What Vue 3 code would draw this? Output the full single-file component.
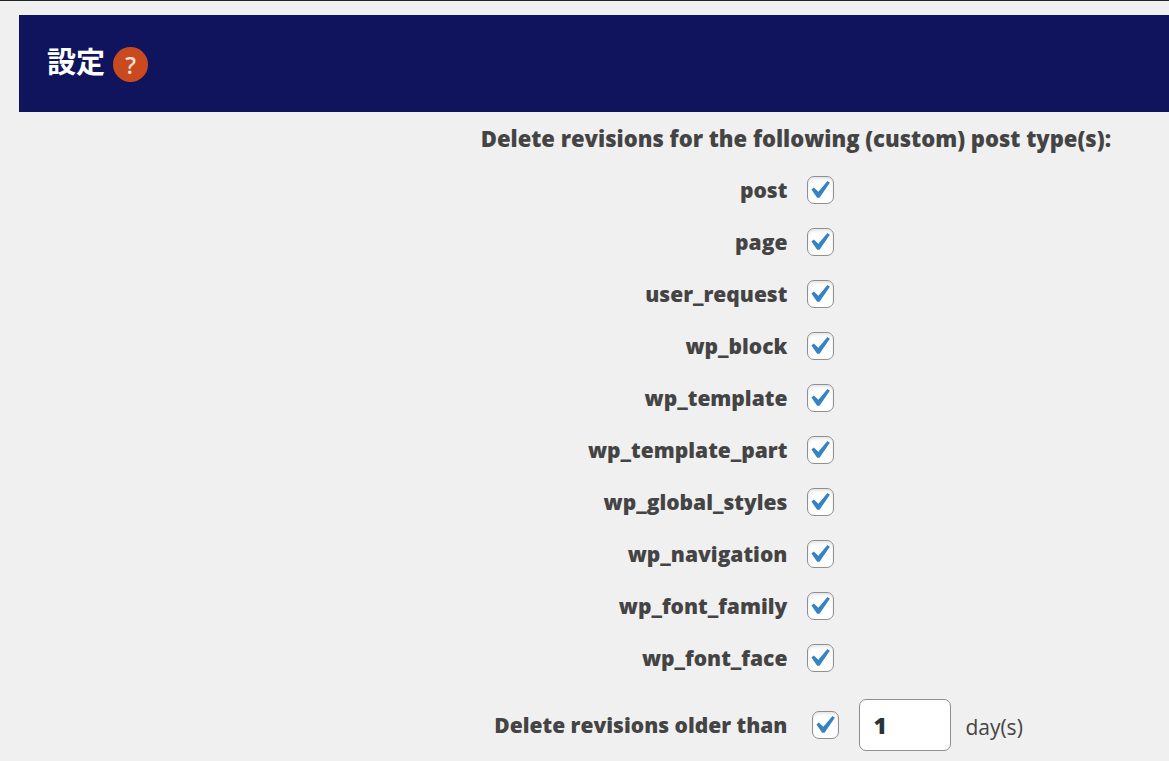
<script setup>
import { ref } from 'vue'

const types = ref([
  'post',
  'page',
  'user_request',
  'wp_block',
  'wp_template',
  'wp_template_part',
  'wp_global_styles',
  'wp_navigation',
  'wp_font_family',
  'wp_font_face',
].map((name) => ({ name, checked: true })))
const olderThan = ref(true)
const days = ref('1')
</script>

<template>
  <main class="panel">
    <header class="bar">
      <h1>設定</h1>
      <button class="help" type="button" aria-label="Help">?</button>
    </header>
    <form class="settings">
      <h2 class="title">Delete revisions for the following (custom) post type(s):</h2>
      <div v-for="t in types" :key="t.name" class="row">
        <label :for="t.name">{{ t.name }}</label>
        <span class="field">
          <span class="box">
            <input :id="t.name" v-model="t.checked" type="checkbox" />
            <svg v-if="t.checked" viewBox="3.3 2 15.2 15.8"><path d="M14.83 4.89l1.34.94-5.81 8.38H9.02L5.78 9.67l1.34-1.25 2.57 2.4z" /></svg>
          </span>
        </span>
      </div>
      <div class="row age">
        <label for="older">Delete revisions older than</label>
        <span class="field">
          <span class="box">
            <input id="older" v-model="olderThan" type="checkbox" />
            <svg v-if="olderThan" viewBox="3.3 2 15.2 15.8"><path d="M14.83 4.89l1.34.94-5.81 8.38H9.02L5.78 9.67l1.34-1.25 2.57 2.4z" /></svg>
          </span>
          <input id="days" v-model="days" class="days" type="text" aria-label="Days" />
          <label class="unit" for="days">day(s)</label>
        </span>
      </div>
    </form>
  </main>
</template>

<style>
body {
  background: #f0f0f0;
}
</style>

<style scoped>
.panel {
  border-top: 1px solid #1d2327;
  padding: 14px 0 0 19px;
  color: #444;
  font-family: "Open Sans", "Noto Sans", "Noto Sans CJK JP", sans-serif;
  font-size: 21px;
}
.bar {
  display: flex;
  align-items: center;
  gap: 8px;
  height: 97px;
  padding: 0 28px;
  box-sizing: border-box;
  background: #10145c;
}
h1 {
  margin: 0;
  padding-bottom: 8px;
  color: #fff;
  font-family: "Noto Sans CJK JP", sans-serif;
  font-size: 29px;
  font-weight: 700;
  line-height: 40px;
}
.help {
  width: 35px;
  height: 35px;
  margin-top: 2px;
  padding: 0;
  border: 0;
  border-radius: 50%;
  background: #ca4a1f;
  color: #fbe3da;
  font: 500 24px/35px "Noto Sans", sans-serif;
}
.title {
  margin: 0 58px 0 0;
  font-size: 22px;
  font-weight: 800;
  line-height: 52px;
  text-align: right;
}
.row {
  display: grid;
  grid-template-columns: 17fr 8fr;
  column-gap: 20px;
  align-items: center;
  height: 52px;
  font-weight: 800;
  text-align: right;
}
.field {
  display: flex;
  align-items: center;
}
.box {
  display: grid;
  width: 27px;
  height: 28px;
}
.box > * {
  grid-area: 1 / 1;
}
.box input {
  appearance: none;
  width: 27px;
  height: 28px;
  margin: 0;
  border: 1px solid #8c8f94;
  border-radius: 7px;
  background: #fff;
  box-shadow: inset 0 2px 3px rgba(0, 0, 0, 0.1);
}
.box svg {
  z-index: 1;
  width: 27px;
  height: 28px;
  fill: #3582c4;
  pointer-events: none;
}
.age {
  height: 82px;
}
.age .field {
  padding-left: 5px;
}
.days {
  width: 92px;
  height: 52px;
  margin: 0 14px 0 20px;
  padding: 0 13px;
  box-sizing: border-box;
  border: 1px solid #8c8f94;
  border-radius: 7px;
  background: #fff;
  color: #2c3338;
  font: 800 23px "Open Sans", "Noto Sans", sans-serif;
}
.unit {
  padding-top: 4px;
  font-weight: 400;
}
</style>
